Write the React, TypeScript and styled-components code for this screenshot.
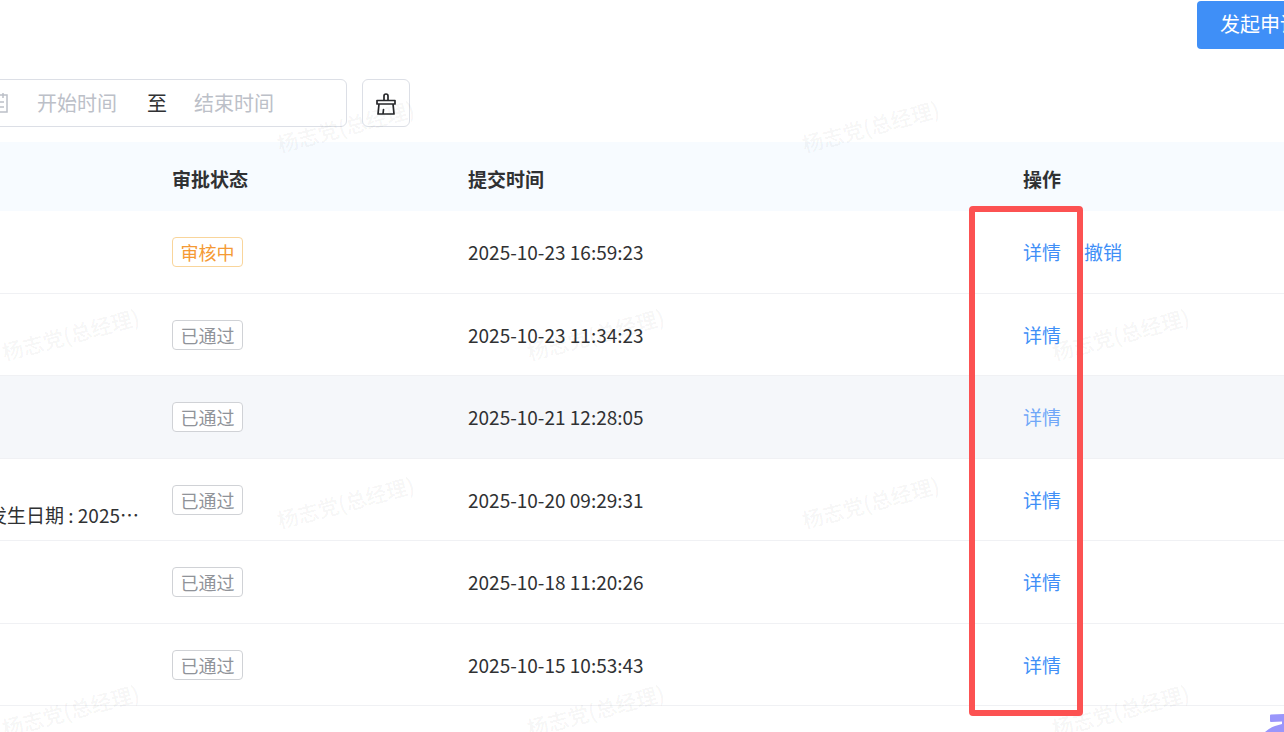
import React from "react";
import styled, { createGlobalStyle, css } from "styled-components";

const GlobalStyle = createGlobalStyle`
  * { box-sizing: border-box; }
  body {
    margin: 0;
    background: #fff;
    color: #303133;
    font-family: "Noto Sans CJK SC", "Noto Sans", sans-serif;
    font-size: 20px;
  }
  button, input { font: inherit; }
`;

const Page = styled.main`
  position: relative;
  min-height: 100vh;
  overflow: hidden;
`;

const Content = styled.div`
  margin: 0 -39px 0 -24px;
`;

const TopBar = styled.header`
  display: flex;
  justify-content: flex-end;
  padding-top: 1px;
`;

const PrimaryButton = styled.button`
  height: 48px;
  padding: 0 23px 3px;
  border: 0;
  border-radius: 4px;
  background: #3f8ff7;
  color: #fff;
`;

const Filters = styled.form`
  display: flex;
  gap: 15px;
  padding: 30px 0 15px;
`;

const DateRange = styled.div`
  display: flex;
  align-items: center;
  width: 371px;
  height: 48px;
  padding-left: 12px;
  border: 1px solid #dcdfe6;
  border-radius: 6px;
`;

const CalendarIcon = styled.svg`
  flex: none;
  width: 20px;
  height: 20px;
  margin-right: 28px;
`;

const DateInput = styled.input`
  width: 110px;
  height: 44px;
  padding: 0 0 2px;
  border: 0;
  outline: 0;
  background: transparent;
  color: #303133;
  &::placeholder { color: #bcc0c8; opacity: 1; }
`;

const Separator = styled.span`
  width: 47px;
  padding-bottom: 2px;
`;

const IconButton = styled.button`
  display: flex;
  align-items: center;
  justify-content: center;
  width: 48px;
  height: 48px;
  padding: 0;
  border: 1px solid #dcdfe6;
  border-radius: 6px;
  background: #fff;
`;

const Table = styled.table`
  width: 100%;
  table-layout: fixed;
  border-collapse: separate;
  border-spacing: 0;
  font-size: 19px;
`;

const HeadCell = styled.th<{ $width?: number }>`
  height: 69px;
  padding: 4px 0 0 15px;
  width: ${(p) => (p.$width ? `${p.$width}px` : "auto")};
  background: #f7fbff;
  font-weight: 700;
  line-height: 28px;
  text-align: left;
`;

const Row = styled.tr<{ $active?: boolean }>`
  height: 82px;
  &:nth-child(odd) { height: 83px; }
  ${(p) => p.$active && css`background: #f5f7fa;`}
`;

const Cell = styled.td`
  padding: 0 0 0 15px;
  border-bottom: 1px solid #f0f1f4;
  line-height: 28px;
  white-space: nowrap;
`;

const Summary = styled.div`
  display: flex;
  justify-content: flex-end;
  align-items: flex-end;
  height: 60px;
  margin-left: -15px;
  padding-right: 18px;
  line-height: 30px;
`;

const Tag = styled.span<{ $pending?: boolean }>`
  display: block;
  width: 71px;
  height: 30px;
  border: 1px solid ${(p) => (p.$pending ? "#f9d59b" : "#d0d2d6")};
  border-radius: 4px;
  background: #fff;
  color: ${(p) => (p.$pending ? "#f59a35" : "#909399")};
  font-size: 18px;
  line-height: 28px;
  text-align: center;
`;

const Actions = styled.div`
  display: flex;
  gap: 23px;
`;

const ActionLink = styled.a<{ $faded?: boolean }>`
  color: ${(p) => (p.$faded ? "#70a7f8" : "#3f8ff7")};
  text-decoration: none;
`;

const Highlight = styled.div`
  position: absolute;
  top: 206px;
  left: 969px;
  width: 114px;
  height: 510px;
  border: 6px solid #fc5252;
  border-radius: 4px;
  pointer-events: none;
`;

const WatermarkLayer = styled.div`
  position: absolute;
  inset: 0;
  overflow: hidden;
  pointer-events: none;
`;

const Watermark = styled.span<{ $x: number; $y: number }>`
  position: absolute;
  left: ${(p) => p.$x}px;
  top: ${(p) => p.$y}px;
  width: 140px;
  line-height: 30px;
  font-size: 21px;
  font-weight: 500;
  text-align: center;
  white-space: nowrap;
  color: rgba(0, 0, 0, 0.05);
  transform: rotate(-15deg);
`;

const Mascot = styled.svg`
  position: absolute;
  right: 0;
  bottom: 0;
  width: 24px;
  height: 24px;
`;

const records = [
  { time: "2025-10-23 16:59:23", pending: true },
  { time: "2025-10-23 11:34:23" },
  { time: "2025-10-21 12:28:05", active: true },
  { time: "2025-10-20 09:29:31", summary: "发生日期 : 2025…" },
  { time: "2025-10-18 11:20:26" },
  { time: "2025-10-15 10:53:43" },
];

const marks = [126, 334, 502, 710].flatMap((y, i) =>
  (i % 2 === 0 ? [345, 870] : [70, 595, 1120]).map((x) => ({ x: x - 70, y: y - 15 }))
);

export default function App() {
  return (
    <>
      <GlobalStyle />
      <Page>
        <Content>
          <TopBar>
            <PrimaryButton type="button">发起申请</PrimaryButton>
          </TopBar>
          <Filters>
            <DateRange>
              <CalendarIcon viewBox="0 0 20 20" fill="none" stroke="#bcc0c8" strokeWidth="1.5" aria-hidden="true">
                <path d="M1 2h17v17H1zM5 0v5M14 0v5M4 9h11M4 14h11" />
              </CalendarIcon>
              <DateInput aria-label="开始时间" placeholder="开始时间" />
              <Separator>至</Separator>
              <DateInput aria-label="结束时间" placeholder="结束时间" />
            </DateRange>
            <IconButton type="button" aria-label="清空">
              <svg width="22" height="24" viewBox="0 0 22 24" fill="none" stroke="#26272a" strokeWidth="1.7" strokeLinejoin="round" strokeLinecap="round" aria-hidden="true">
                <path d="M9 9.500V5a2 2 0 0 1 4 0V9.500M2 9.500h18v3.500H2zM4 13L3 23h16L18 13M8.500 18.500L8 23" />
              </svg>
            </IconButton>
          </Filters>
          <Table>
            <thead>
              <tr>
                <HeadCell $width={181} aria-label="摘要" />
                <HeadCell $width={296}>审批状态</HeadCell>
                <HeadCell $width={555}>提交时间</HeadCell>
                <HeadCell>操作</HeadCell>
              </tr>
            </thead>
            <tbody>
              {records.map((r) => (
                <Row key={r.time} $active={r.active}>
                  <Cell>{r.summary && <Summary>{r.summary}</Summary>}</Cell>
                  <Cell>
                    <Tag $pending={r.pending}>{r.pending ? "审核中" : "已通过"}</Tag>
                  </Cell>
                  <Cell>{r.time}</Cell>
                  <Cell>
                    <Actions>
                      <ActionLink href="#detail" $faded={r.active}>详情</ActionLink>
                      {r.pending && <ActionLink href="#revoke">撤销</ActionLink>}
                    </Actions>
                  </Cell>
                </Row>
              ))}
            </tbody>
          </Table>
        </Content>
        <WatermarkLayer aria-hidden="true">
          {marks.map((m) => (
            <Watermark key={`${m.x}-${m.y}`} $x={m.x} $y={m.y}>杨志党(总经理)</Watermark>
          ))}
        </WatermarkLayer>
        <Highlight />
        <Mascot viewBox="0 0 24 24" fill="#9a96fb" aria-hidden="true">
          <path d="M10 7.500q0-.8 1-.9L24 6v18H5q4-4 10-6l7-2v-2.500l-11 .6q-1 0-1-1z" />
        </Mascot>
      </Page>
    </>
  );
}
